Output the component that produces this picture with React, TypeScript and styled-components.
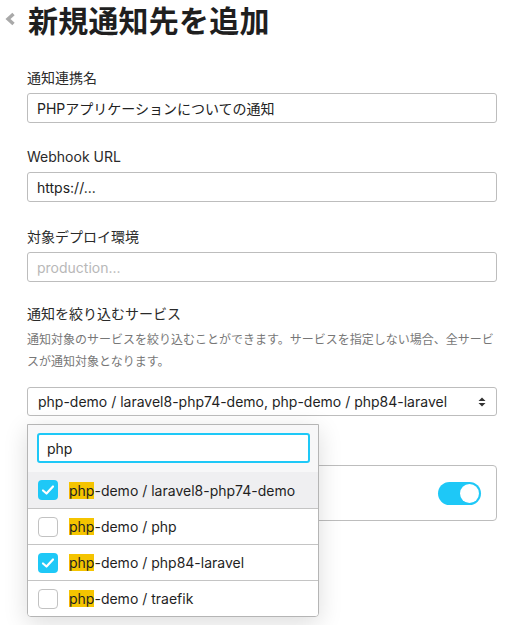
import React from "react";
import styled, { createGlobalStyle } from "styled-components";

const GlobalStyle = createGlobalStyle`
  html, body {
    margin: 0;
    padding: 0;
    background: #fff;
  }
  body {
    font-family: Inter, "Noto Sans CJK JP", sans-serif;
    color: #222;
    -webkit-font-smoothing: antialiased;
  }
`;

const Page = styled.div`
  width: 510px;
  height: 625px;
  overflow: hidden;
  padding: 0 13px 0 27px;
  box-sizing: border-box;
`;

const Header = styled.div`
  display: flex;
  align-items: center;
  height: 38px;
  margin-left: -23px;
`;

const BackButton = styled.span`
  display: flex;
  width: 24px;
  justify-content: flex-start;
`;

const Title = styled.h1`
  margin: 0;
  font-size: 30px;
  line-height: 32px;
  font-weight: 700;
  color: #1f1f1f;
  font-family: "Noto Sans CJK JP", sans-serif;
  letter-spacing: 0.2px;
`;

const Field = styled.div<{ $top: number }>`
  margin-top: ${({ $top }) => $top}px;
`;

const Label = styled.div<{ $gap: number }>`
  font-size: 14px;
  line-height: 20px;
  min-height: 20px;
  color: #2a2a2a;
  margin-bottom: ${({ $gap }) => $gap}px;
`;

const Description = styled.p`
  margin: 5px 0 14px;
  font-size: 12px;
  line-height: 22px;
  color: #777;
`;

const TextInput = styled.input`
  display: block;
  width: 100%;
  height: 30px;
  box-sizing: border-box;
  border: 1px solid #bdbdbd;
  border-radius: 3px;
  padding: 0 9px;
  font: inherit;
  font-size: 14px;
  color: #222;
  background: #fff;
  outline: none;
  &::placeholder {
    color: #b8b8b8;
  }
`;

const SelectWrap = styled.div`
  position: relative;
`;

const SelectBox = styled.div`
  display: flex;
  align-items: center;
  justify-content: space-between;
  height: 29px;
  box-sizing: border-box;
  border: 1px solid #bdbdbd;
  border-radius: 3px;
  padding: 0 10px 0 10px;
  font-size: 14px;
  color: #1f1f1f;
`;

const Dropdown = styled.div`
  position: absolute;
  left: 0;
  top: 37px;
  width: 292px;
  box-sizing: border-box;
  background: #fff;
  border: 1px solid #b5b5b5;
  border-radius: 0 0 4px 4px;
  box-shadow: 0 6px 24px rgba(0, 0, 0, 0.14);
  overflow: hidden;
  z-index: 10;
`;

const SearchArea = styled.div`
  background: #f7f7f8;
  padding: 8px 8px 9px 9px;
`;

const SearchInput = styled.input`
  display: block;
  width: 100%;
  height: 30px;
  box-sizing: border-box;
  border: 2px solid #1ec8f7;
  border-radius: 3px;
  padding: 0 8px;
  font: inherit;
  font-size: 14px;
  color: #222;
  background: #fff;
  outline: none;
`;

const Option = styled.div<{ $active?: boolean; $first?: boolean }>`
  display: flex;
  align-items: center;
  gap: 11px;
  height: 36px;
  box-sizing: border-box;
  padding-left: 10px;
  font-size: 14px;
  color: #1f1f1f;
  background: ${({ $active }) => ($active ? "#efeff1" : "#fff")};
  border-top: ${({ $first }) => ($first ? "none" : "1px solid #c4c4c4")};
`;

const Checkbox = styled.span<{ $checked: boolean }>`
  display: flex;
  align-items: center;
  justify-content: center;
  width: 20px;
  height: 20px;
  box-sizing: border-box;
  border-radius: 4px;
  background: ${({ $checked }) => ($checked ? "#1ec8f7" : "#fff")};
  border: ${({ $checked }) => ($checked ? "none" : "1px solid #c2c2c2")};
`;

const Mark = styled.mark`
  background: #f5c400;
  color: #1f1f1f;
`;

const Card = styled.div`
  display: flex;
  align-items: center;
  justify-content: flex-end;
  height: 56px;
  box-sizing: border-box;
  border: 1px solid #bdbdbd;
  border-radius: 4px;
  padding: 0 15px 0 12px;
`;

const Toggle = styled.span<{ $on: boolean }>`
  display: flex;
  align-items: center;
  justify-content: ${({ $on }) => ($on ? "flex-end" : "flex-start")};
  width: 43px;
  height: 23px;
  box-sizing: border-box;
  padding: 2px;
  border-radius: 12px;
  background: ${({ $on }) => ($on ? "#1ec8f7" : "#ccc")};
`;

const Knob = styled.span`
  width: 19px;
  height: 19px;
  border-radius: 50%;
  background: #fff;
`;

const ChevronLeft = () => (
  <svg width="12" height="14" viewBox="0 0 12 14">
    <polyline points="9.5,2 4,7 9.5,12" fill="none" stroke="#a9a9a9" strokeWidth="3.4" strokeLinejoin="miter" />
  </svg>
);

const SortArrows = () => (
  <svg width="8" height="12" viewBox="0 0 8 12">
    <polygon points="4,1.5 7.5,5 0.5,5" fill="#333" />
    <polygon points="0.5,7 7.5,7 4,10.5" fill="#333" />
  </svg>
);

const Check = () => (
  <svg width="14" height="12" viewBox="0 0 14 12">
    <polyline points="2,6.5 5.5,9.5 12,2.5" fill="none" stroke="#fff" strokeWidth="2.2" strokeLinecap="round" strokeLinejoin="round" />
  </svg>
);

const services = [
  { name: "laravel8-php74-demo", checked: true },
  { name: "php", checked: false },
  { name: "php84-laravel", checked: true },
  { name: "traefik", checked: false },
];

export default function App() {
  return (
    <>
      <GlobalStyle />
      <Page>
        <Header>
          <BackButton>
            <ChevronLeft />
          </BackButton>
          <Title>新規通知先を追加</Title>
        </Header>

        <Field $top={30}>
          <Label $gap={5}>通知連携名</Label>
          <TextInput defaultValue="PHPアプリケーションについての通知" />
        </Field>

        <Field $top={24}>
          <Label $gap={5}>Webhook URL</Label>
          <TextInput defaultValue="https://..." />
        </Field>

        <Field $top={25}>
          <Label $gap={5}>対象デプロイ環境</Label>
          <TextInput placeholder="production..." />
        </Field>

        <Field $top={22}>
          <Label $gap={0}>通知を絞り込むサービス</Label>
          <Description>
            通知対象のサービスを絞り込むことができます。サービスを指定しない場合、全サービスが通知対象となります。
          </Description>
          <SelectWrap>
            <SelectBox>
              <span>php-demo / laravel8-php74-demo, php-demo / php84-laravel</span>
              <SortArrows />
            </SelectBox>
            <Dropdown>
              <SearchArea>
                <SearchInput defaultValue="php" />
              </SearchArea>
              {services.map((s, i) => (
                <Option key={s.name} $active={i === 0} $first={i === 0}>
                  <Checkbox $checked={s.checked}>{s.checked && <Check />}</Checkbox>
                  <span>
                    <Mark>php</Mark>-demo / {s.name}
                  </span>
                </Option>
              ))}
            </Dropdown>
          </SelectWrap>
        </Field>

        <Field $top={14}>
          <Label $gap={15} />
          <Card>
            <Toggle $on>
              <Knob />
            </Toggle>
          </Card>
        </Field>
      </Page>
    </>
  );
}
